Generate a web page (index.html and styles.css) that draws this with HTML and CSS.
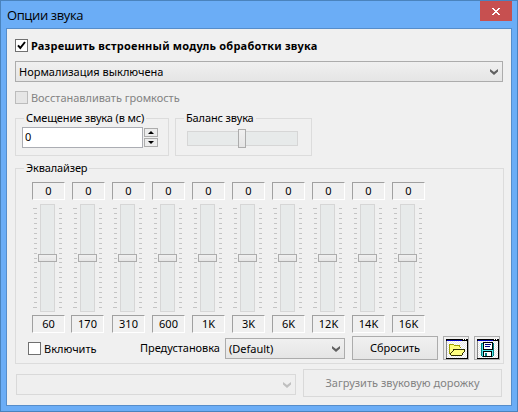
FILE: index.html
```html
<!DOCTYPE html>
<html lang="ru">
<head>
<meta charset="utf-8">
<title>Опции звука</title>
<link rel="stylesheet" href="styles.css">
</head>
<body>
<div class="window">
  <header class="titlebar">
    <h1>Опции звука</h1>
    <button class="close" aria-label="Закрыть"><svg width="8" height="7" viewBox="0 0 8 7" shape-rendering="crispEdges"><path fill="#fff" d="M0 0h2v1H0zM6 0h2v1H6zM1 1h2v1H1zM5 1h2v1H5zM2 2h4v1H2zM3 3h2v1H3zM2 4h4v1H2zM1 5h2v1H1zM5 5h2v1H5zM0 6h2v1H0zM6 6h2v1H6z"/></svg></button>
  </header>
  <main class="client">
    <label class="check enable"><span class="box"><svg width="11" height="11" viewBox="0 0 11 11"><path d="M2 5.3L4.3 8L9 2" fill="none" stroke="#000" stroke-width="2"/></svg></span><b>Разрешить встроенный модуль обработки звука</b></label>
    <div class="combo norm"><span>Нормализация выключена</span><svg class="chev" width="8" height="6" viewBox="0 0 8 6"><path d="M0 0L4 3L8 0V2.5L4 6L0 2.5z"/></svg></div>
    <label class="check restore off"><span class="box"></span><span>Восстанавливать громкость</span></label>
    <div class="groups">
      <section class="group shift">
        <h2><span>Смещение звука (в мс)</span></h2>
        <div class="spin"><div class="input">0</div><div class="arrows"><i><svg width="6" height="3" viewBox="0 0 6 3"><path d="M3 0L6 3H0z"/></svg></i><i><svg width="6" height="3" viewBox="0 0 6 3"><path d="M0 0H6L3 3z"/></svg></i></div></div>
      </section>
      <section class="group balance">
        <h2><span>Баланс звука</span></h2>
        <div class="htrack"><div class="hthumb"></div></div>
      </section>
    </div>
    <section class="group eq">
      <h2><span>Эквалайзер</span></h2>
      <div class="bands" id="bands"></div>
      <div class="actions">
        <label class="check on"><span class="box"></span><span>Включить</span></label>
        <span class="preset">Предустановка</span>
        <div class="combo default"><span>(Default)</span><svg class="chev" width="8" height="6" viewBox="0 0 8 6"><path d="M0 0L4 3L8 0V2.5L4 6L0 2.5z"/></svg></div>
        <button class="btn reset"><span>Сбросить</span></button>
        <button class="btn tool" aria-label="Открыть"><svg width="22" height="21" viewBox="0 0 22 21" shape-rendering="crispEdges"><use href="#frame"/><path d="M3 5h5v1h6v4h4v2l-3 4H4l-1-1z" fill="#ffff80"/><path d="M3.5 15V5.5h4l1 1h5l1 3" fill="none" stroke="#a0a000"/><path d="M4 15.5l4-5h10.500v1.500l-3 4.500H4.500" fill="#ffff80" stroke="#303000"/></svg></button>
        <button class="btn tool save" aria-label="Сохранить"><svg width="22" height="21" viewBox="0 0 22 21" shape-rendering="crispEdges"><use href="#frame"/><path d="M4.5 4.5h12v12l-1 1h-10l-1-1z" fill="#50e4e8" stroke="#008080"/><path d="M6.5 3.5h9v7h-9z" fill="#fff" stroke="#000"/><path d="M8 5.500h6M8 7.500h5" stroke="#000080"/><path d="M6.5 12.5h8v5h-8z" fill="#fff" stroke="#000"/><path d="M8 14h2v3H8z" fill="#008080"/></svg></button>
      </div>
    </section>
    <footer class="bottom">
      <div class="combo off track"><svg class="chev" width="8" height="6" viewBox="0 0 8 6"><path d="M0 0L4 3L8 0V2.5L4 6L0 2.5z"/></svg></div>
      <button class="btn load" disabled><span>Загрузить звуковую дорожку</span></button>
    </footer>
  </main>
</div>
<svg width="0" height="0" class="defs"><defs>
  <pattern id="dither" width="2" height="2" patternUnits="userSpaceOnUse"><path d="M0 0h2v2H0z" fill="#fff"/><path d="M0 0h1v1H0zM1 1h1v1H1z" fill="#e8e8e8"/></pattern>
  <g id="frame"><path d="M0 0h22v20H0z" fill="url(#dither)"/><path d="M0 0h22v2H0z" fill="#000"/><path d="M1 1h15v1H1z" fill="#00b"/><path d="M17 0h1v1h-1zM19 0h1v1h-1z" fill="#fff"/><path d="M21 0h1v20h-1zM0 19h22v1H0z" fill="#000"/><path d="M0 2h1v17H0z" fill="#888"/></g>
</defs></svg>
<script src="bands.js"></script>
</body>
</html>
```
FILE: styles.css
```css
* { box-sizing: border-box; }
body { margin: 0; font: 11px/16px "Noto Sans", "Open Sans", sans-serif; color: #000; overflow: hidden; }
h1, h2 { margin: 0; font: inherit; }
button { font: inherit; padding: 0; margin: 0; }
span, b { white-space: nowrap; }
.defs { display: block; }
.window { width: 518px; height: 412px; background: #6badf6; border: 1px solid #4a83bd; padding: 0 5px 5px; }
.titlebar { height: 27px; display: flex; justify-content: space-between; align-items: flex-start; }
.titlebar h1 { font: 13px/20px "Open Sans", sans-serif; letter-spacing: -0.4px; padding: 4px 0 0 1px; }
.close { width: 32px; height: 20px; background: #c75050; border: 0; display: flex; align-items: center; justify-content: center; }
.client { width: 506px; height: 378px; background: #f0f0f0; border: 1px solid #568dca; padding: 10px 7px 0 8px; }
.check { display: flex; align-items: center; gap: 3px; height: 13px; }
.enable b { letter-spacing: 0.22px; }
.restore span { letter-spacing: -0.03px; }
.box { width: 13px; height: 13px; flex: none; border: 1px solid #707070; background: #fff; display: block; }
.box svg { display: block; }
.off .box { border-color: #bcbcbc; background: #e6e6e6; }
.off { color: #838383; }
.combo { height: 21px; border: 1px solid #acacac; background: linear-gradient(#f0f0f0, #e5e5e5); display: flex; align-items: center; justify-content: space-between; padding: 0 4px 0 3px; }
.chev { fill: #606060; flex: none; }
.norm { width: 488px; margin: 9px 0; }
.groups { display: flex; gap: 6px; margin-top: 14px; }
.group { height: 38px; border: 1px solid #dcdcdc; }
.group h2 { height: 16px; margin: -9px 0 0 8px; letter-spacing: -0.14px; }
.group h2 span { background: #f0f0f0; padding: 0 2px; display: inline-block; }
.shift { width: 154px; }
.spin { display: flex; gap: 1px; margin: 1px 0 0 6px; }
.input { width: 121px; height: 21px; background: #fff; border: 1px solid #abadb3; padding: 1px 2px; }
.arrows { padding-top: 1px; display: grid; gap: 1px; align-content: start; }
.arrows i { width: 14px; height: 9px; border: 1px solid #acacac; background: #ececec; display: flex; align-items: center; justify-content: center; }
.balance { width: 137px; }
.htrack { width: 111px; height: 15px; margin: 5px 0 0 11px; border: 1px solid #d6d6d6; background: #e7eaea; }
.hthumb { width: 8px; height: 19px; margin: -3px 0 0 50px; border: 1px solid #acacac; background: linear-gradient(#f0f0f0, #e5e5e5); }
.eq { width: 489px; height: 196px; margin-top: 12px; }
.bands { display: flex; gap: 7px; margin: 6px 0 0 16px; }
.band { width: 33px; }
.num { height: 18px; border: 1px solid #fff; border-top-color: #a0a0a0; border-left-color: #a0a0a0; text-align: center; line-height: 16px; }
.num.wide { margin: 0 1px 0 -1px; }
.slider { display: flex; height: 108px; margin: 4px 0 3px 1px; }
.slider svg { display: block; flex: none; }
.vtrack { width: 15px; height: 108px; margin: 0 4px 0 3px; border: 1px solid #d6d6d6; background: #e7eaea; }
.vthumb { width: 19px; height: 8px; margin: 49px 0 0 -3px; border: 1px solid #acacac; background: linear-gradient(#f0f0f0, #e5e5e5); }
.actions { display: flex; align-items: flex-start; margin: 3px 0 0 12px; height: 24px; }
.on { width: 112px; margin-top: 6px; }
.preset { width: 85px; margin-top: 4px; letter-spacing: -0.05px; }
.default { width: 120px; margin: 2px 7px 0 0; }
.btn { border: 1px solid #acacac; background: linear-gradient(#f0f0f0, #e5e5e5); height: 24px; color: inherit; }
.reset { width: 86px; }
.tool { width: 26px; margin-left: 5px; padding: 2px 0 0 2px; }
.tool svg { display: block; }
.bottom { display: flex; gap: 7px; margin: 5px 0 0 1px; }
.track { width: 280px; margin-top: 5px; border-color: #d9d9d9; background: #efefef; justify-content: flex-end; }
.track .chev { fill: #bfbfbf; }
.load { width: 199px; height: 28px; border-color: #d9d9d9; background: #efefef; color: #838383; }
```
FILE: bands.js
```js
const labels = ["60", "170", "310", "600", "1K", "3K", "6K", "12K", "14K", "16K"];
const offsets = [4, 9, 14, 19, 24, 29, 34, 39, 44, 49, 54, 58, 63, 68, 73, 78, 83, 88, 93, 98, 103];
function ticks(left) {
  const d = offsets.map((y, i) => {
    const end = left && (i === 0 || i === offsets.length - 1);
    const x = left ? (end ? 0 : 1) : 0;
    return `M${x} ${y}h${end ? 4 : 3}v1H${x}z`;
  }).join("");
  return `<svg width="4" height="108" shape-rendering="crispEdges"><path fill="#c4c4c4" d="${d}"/></svg>`;
}
document.getElementById("bands").innerHTML = labels.map(t =>
  `<div class="band"><div class="num">0</div><div class="slider">${ticks(true)}<div class="vtrack"><div class="vthumb"></div></div>${ticks(false)}</div><div class="num${t === "170" ? " wide" : ""}">${t}</div></div>`
).join("");
```
